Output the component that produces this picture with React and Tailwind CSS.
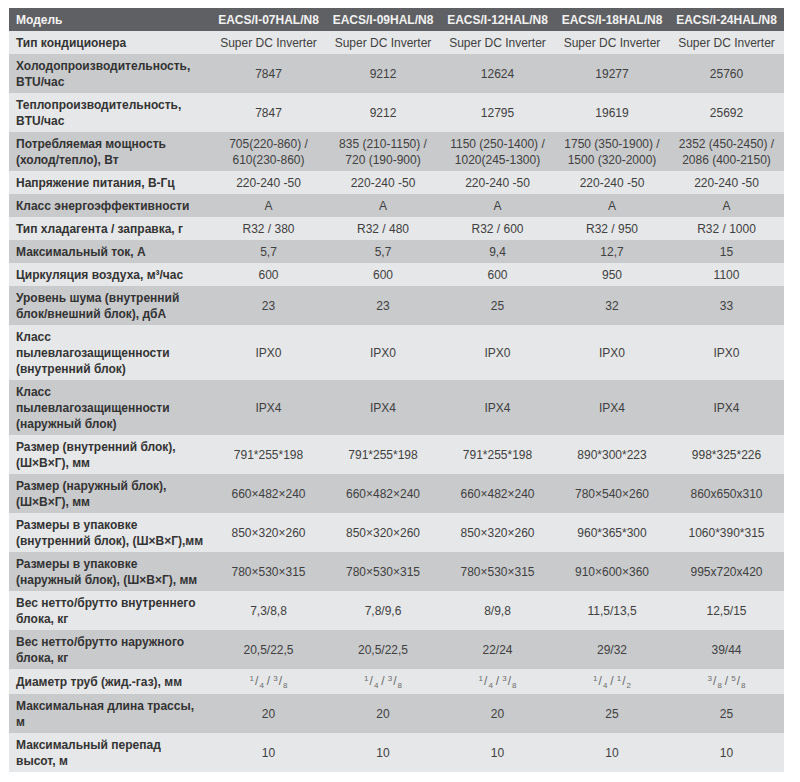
import React from "react";

const F = ({ n, d }) => (
  <span className="inline-flex items-baseline">
    <span className="text-[8px] relative top-[-4px]">{n}</span>
    <span className="mx-[1px]">/</span>
    <span className="text-[8px] relative top-[3px]">{d}</span>
  </span>
);

const frac = (a, b, c, d) => (
  <span className="inline-flex items-baseline gap-[3px] text-[#6b6b6b]">
    <F n={a} d={b} />
    <span>/</span>
    <F n={c} d={d} />
  </span>
);

const rows = [
  ["Тип кондиционера", ["Super DC Inverter", "Super DC Inverter", "Super DC Inverter", "Super DC Inverter", "Super DC Inverter"]],
  ["Холодопроизводительность,\nBTU/час", ["7847", "9212", "12624", "19277", "25760"]],
  ["Теплопроизводительность,\nBTU/час", ["7847", "9212", "12795", "19619", "25692"]],
  ["Потребляемая мощность\n(холод/тепло), Вт", ["705(220-860) /\n610(230-860)", "835 (210-1150) /\n720 (190-900)", "1150 (250-1400) /\n1020(245-1300)", "1750 (350-1900) /\n1500 (320-2000)", "2352 (450-2450) /\n2086 (400-2150)"]],
  ["Напряжение питания, В-Гц", ["220-240 -50", "220-240 -50", "220-240 -50", "220-240 -50", "220-240 -50"]],
  ["Класс энергоэффективности", ["A", "A", "A", "A", "A"]],
  ["Тип хладагента / заправка, г", ["R32 / 380", "R32 / 480", "R32 / 600", "R32 / 950", "R32 / 1000"]],
  ["Максимальный ток, А", ["5,7", "5,7", "9,4", "12,7", "15"]],
  ["Циркуляция воздуха, м³/час", ["600", "600", "600", "950", "1100"]],
  ["Уровень шума (внутренний\nблок/внешний блок), дбА", ["23", "23", "25", "32", "33"]],
  ["Класс\nпылевлагозащищенности\n(внутренний блок)", ["IPX0", "IPX0", "IPX0", "IPX0", "IPX0"]],
  ["Класс\nпылевлагозащищенности\n(наружный блок)", ["IPX4", "IPX4", "IPX4", "IPX4", "IPX4"]],
  ["Размер (внутренний блок),\n(Ш×В×Г), мм", ["791*255*198", "791*255*198", "791*255*198", "890*300*223", "998*325*226"]],
  ["Размер (наружный блок),\n(Ш×В×Г), мм", ["660×482×240", "660×482×240", "660×482×240", "780×540×260", "860x650x310"]],
  ["Размеры в упаковке\n(внутренний блок), (Ш×В×Г),мм", ["850×320×260", "850×320×260", "850×320×260", "960*365*300", "1060*390*315"]],
  ["Размеры в упаковке\n(наружный блок), (Ш×В×Г), мм", ["780×530×315", "780×530×315", "780×530×315", "910×600×360", "995x720x420"]],
  ["Вес нетто/брутто внутреннего\nблока, кг", ["7,3/8,8", "7,8/9,6", "8/9,8", "11,5/13,5", "12,5/15"]],
  ["Вес нетто/брутто наружного\nблока, кг", ["20,5/22,5", "20,5/22,5", "22/24", "29/32", "39/44"]],
  ["Диаметр труб (жид.-газ), мм", [frac("1", "4", "3", "8"), frac("1", "4", "3", "8"), frac("1", "4", "3", "8"), frac("1", "4", "1", "2"), frac("3", "8", "5", "8")]],
  ["Максимальная длина трассы,\nм", ["20", "20", "20", "25", "25"]],
  ["Максимальный перепад\nвысот, м", ["10", "10", "10", "10", "10"]],
];

const models = ["EACS/I-07HAL/N8", "EACS/I-09HAL/N8", "EACS/I-12HAL/N8", "EACS/I-18HAL/N8", "EACS/I-24HAL/N8"];

export default function App() {
  return (
    <div className="w-[800px] h-[782px] bg-white pt-[8px] pl-[9px] font-['Liberation_Sans',Arial,sans-serif]">
      <table className="border-collapse table-fixed w-[775px] text-[12px] leading-[16px]">
        <colgroup>
          <col className="w-[202px]" />
          <col className="w-[115px]" />
          <col className="w-[114px]" />
          <col className="w-[115px]" />
          <col className="w-[114px]" />
          <col className="w-[115px]" />
        </colgroup>
        <thead>
          <tr className="bg-[#5f6063] text-[#f2f2f2] font-bold">
            <th className="text-left pl-[7px] py-[3.5px] font-bold">Модель</th>
            {models.map((m) => (
              <th key={m} className="text-center py-[3.5px] font-bold whitespace-nowrap">{m}</th>
            ))}
          </tr>
        </thead>
        <tbody>
          {rows.map(([label, vals], i) => (
            <tr key={i} className={i % 2 === 0 ? "bg-[#e6e7e8]" : "bg-[#c9cacc]"}>
              <td className="pl-[7px] py-[3.5px] font-bold text-[#333333] whitespace-pre-line align-middle">{label}</td>
              {vals.map((v, j) => (
                <td key={j} className="text-center py-[3.5px] text-[#404040] whitespace-pre-line align-middle">{v}</td>
              ))}
            </tr>
          ))}
        </tbody>
      </table>
    </div>
  );
}
